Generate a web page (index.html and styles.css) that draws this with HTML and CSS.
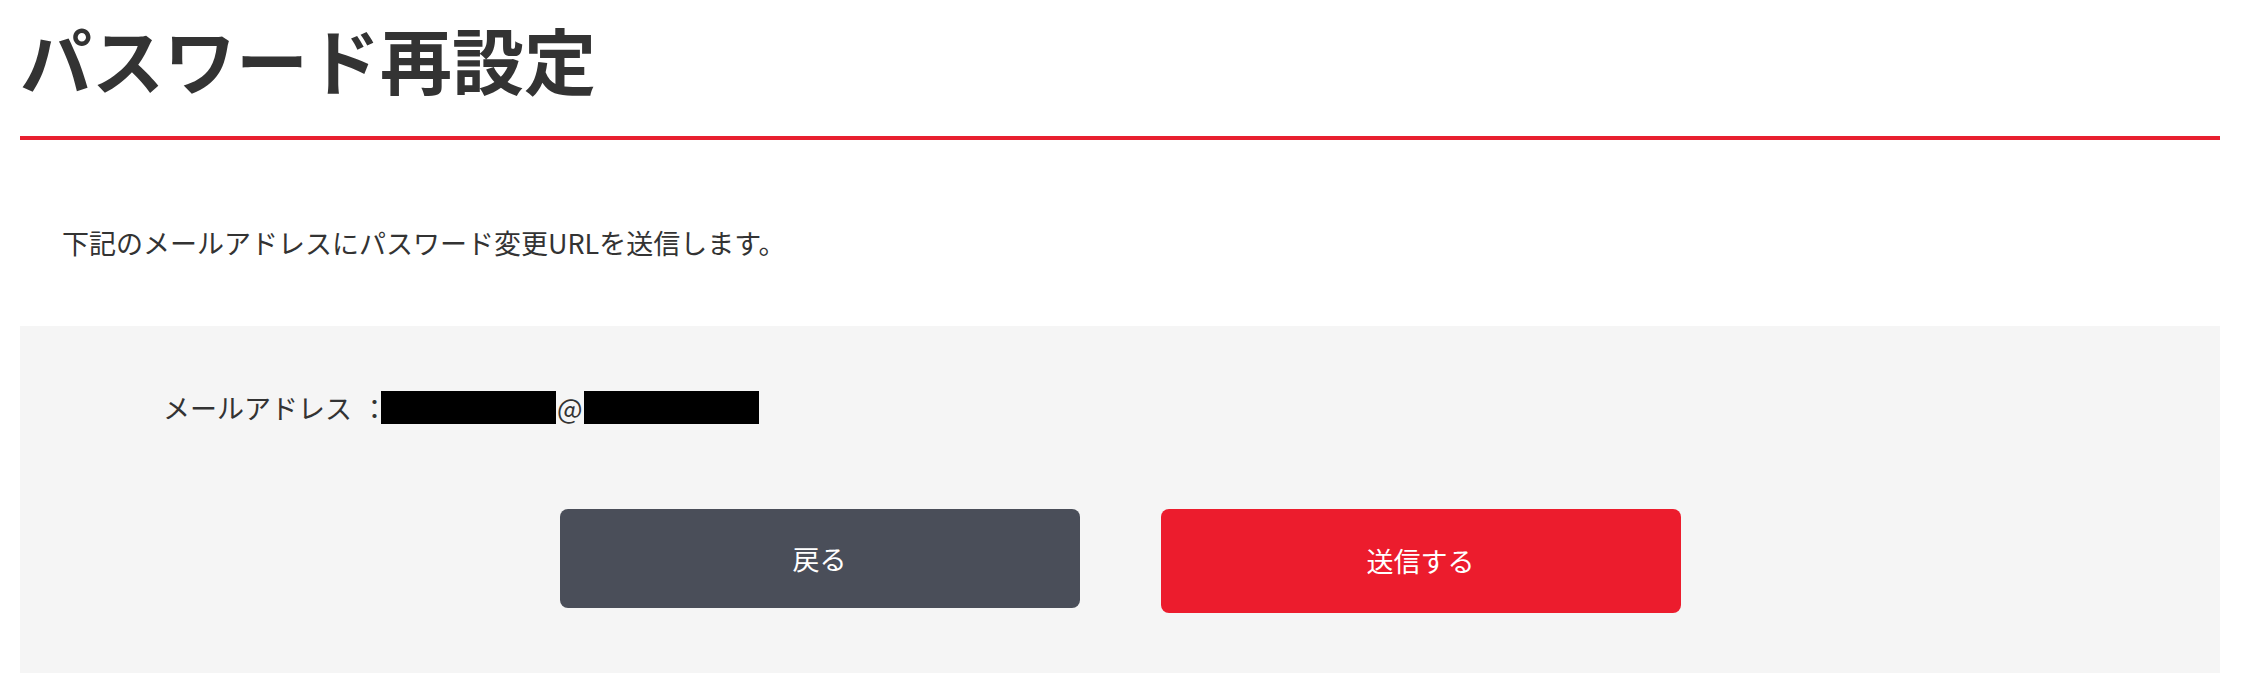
FILE: index.html
```html
<!DOCTYPE html>
<html lang="ja">
<head>
    <meta charset="UTF-8">
    <meta name="viewport" content="width=device-width, initial-scale=1.0">
    <title>パスワード再設定</title>
    <link rel="stylesheet" href="styles.css">
</head>
<body>

    <main class="page">
        <h1 class="page-title">パスワード再設定</h1>
        <p class="lead">下記のメールアドレスにパスワード変更URLを送信します。</p>

        <section class="confirm">
            <div class="field">
                <span class="field-label">メールアドレス</span>
                <span class="field-sep">：</span>
                <span class="masked"></span>
                <span class="at">@</span>
                <span class="masked"></span>
            </div>
            <div class="actions">
                <a href="#" class="btn btn-back">戻る</a>
                <button type="submit" class="btn btn-send">送信する</button>
            </div>
        </section>
    </main>

</body>
</html>
```

FILE: styles.css
```css
* {
    box-sizing: border-box;
    margin: 0;
    padding: 0;
}
body {
    background-color: #ffffff;
    color: #333333;
    font-family: "Noto Sans CJK JP", "Noto Sans", sans-serif;
}
.page {
    padding: 0 23px 0 20px;
}
.page-title {
    font-size: 72px;
    font-weight: 700;
    line-height: 1.5;
    padding: 4px 0 24px;
    border-bottom: 4px solid #e8202f;
    color: #333333;
}
.lead {
    font-size: 27px;
    line-height: 1.5;
    margin: 83px 0 0 42px;
}
.confirm {
    margin-top: 62px;
    background-color: #f5f5f5;
    padding: 62px 0 60px;
}
.field {
    display: flex;
    align-items: center;
    height: 40px;
    padding-left: 143px;
    font-size: 27px;
}
.field-sep {
    margin: 0 -7px 0 9px;
}
.masked {
    display: inline-block;
    width: 175px;
    height: 33px;
    background-color: #000000;
}
.at {
    margin: 0 1px;
    line-height: 1;
}
.actions {
    display: flex;
    justify-content: center;
    align-items: flex-start;
    gap: 81px;
    margin-top: 81px;
}
.btn {
    display: flex;
    align-items: center;
    justify-content: center;
    width: 520px;
    border: none;
    border-radius: 8px;
    color: #ffffff;
    font-family: inherit;
    font-size: 27px;
    text-decoration: none;
    cursor: pointer;
}
.btn-back {
    height: 99px;
    background-color: #4a4e59;
}
.btn-send {
    height: 104px;
    background-color: #ec1c2d;
}
```
